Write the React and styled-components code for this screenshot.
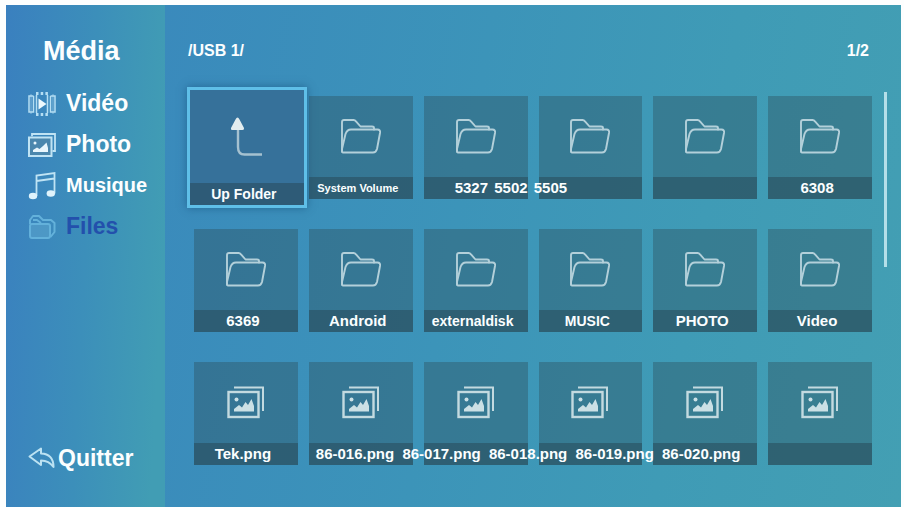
import React, { useState } from 'react';
import styled, { createGlobalStyle } from 'styled-components';

const GlobalStyle = createGlobalStyle`
  * {
    box-sizing: border-box;
  }

  body {
    margin: 0;
    background: #fdfefe;
    font-family: 'Liberation Sans', Arial, sans-serif;
    font-weight: bold;
  }

  button {
    border: 0;
    padding: 0;
    background: none;
    color: inherit;
    font: inherit;
    cursor: pointer;
  }
`;

const Screen = styled.div`
  display: flex;
  min-height: 100vh;
  padding: 5px 3px 0 6px;
  color: #fbfeff;
`;

const Sidebar = styled.nav`
  display: flex;
  flex-direction: column;
  flex: 0 0 159px;
  padding: 30px 0 36px 22px;
  background: linear-gradient(93deg, #3a80bf 0%, #3c8fba 50%, #419db4 92%);
`;

const SidebarTitle = styled.h1`
  margin: 0 0 16px 15px;
  font-size: 27px;
  line-height: 32px;
`;

const Menu = styled.ul`
  margin: 0;
  padding: 0;
  list-style: none;
`;

const MenuButton = styled.button`
  display: flex;
  align-items: center;
  gap: ${({ $tight }) => ($tight ? '2px' : '10px')};
  height: ${({ $tight }) => ($tight ? '26px' : '41px')};
  color: ${({ $active }) => ($active ? '#2350ac' : 'inherit')};
  font-size: ${({ $small }) => ($small ? '20px' : '23px')};

  svg {
    flex: none;
    opacity: ${({ $active }) => ($active ? 0.7 : 1)};
  }
`;

const QuitArea = styled.div`
  margin-top: auto;
`;

const Main = styled.main`
  flex: 1;
  min-width: 0;
  padding: 36px 14px 30px 23px;
  background: linear-gradient(100deg, #3a8abc 0%, #3c94b9 40%, #3f9bb6 70%, #439fb3 100%);
`;

const Header = styled.header`
  display: flex;
  justify-content: space-between;
  padding-right: 18px;
  font-size: 16px;
  line-height: 20px;
`;

const Body = styled.div`
  display: flex;
  align-items: flex-start;
  gap: 12px;
  padding: 35px 0 0 6px;
`;

const Grid = styled.div`
  display: grid;
  flex: 1;
  grid-template-columns: repeat(6, minmax(0, 1fr));
  grid-auto-rows: 103px;
  column-gap: 11px;
  row-gap: 30px;
`;

const ScrollThumb = styled.div`
  flex: none;
  width: 3px;
  height: 175px;
  margin-top: -4px;
  background: #b4dfe9;
`;

const Tile = styled.button`
  display: flex;
  flex-direction: column;
  min-width: 0;
  margin: ${({ $selected }) => ($selected ? '-9px -9px -9px -7px' : '0')};
  border: ${({ $selected }) => ($selected ? '3px solid #5fbfe8' : '0')};
  background: ${({ $selected }) => ($selected ? '#36719a' : 'rgba(45, 80, 92, 0.4)')};
  box-shadow: ${({ $selected }) => ($selected ? '0 0 8px rgba(14, 66, 110, 0.5)' : 'none')};
`;

const TileIcon = styled.span`
  display: flex;
  align-items: center;
  justify-content: center;
  flex: 1;
  width: 100%;
`;

// names longer than a tile run on over the tiles beside it
const TileLabel = styled.span`
  display: flex;
  justify-content: ${({ $indent }) => ($indent ? 'flex-start' : 'center')};
  width: 100%;
  height: 22px;
  padding-left: ${({ $indent }) => $indent || 0}px;
  padding-right: 6px;
  background: rgba(38, 70, 84, 0.5);
  font-size: ${({ $size }) => $size || 15}px;
  line-height: 22px;
  white-space: nowrap;
`;

const TileText = styled.span`
  position: relative;
  z-index: 1;
`;

const Name = styled.span`
  &:not(:first-child) {
    margin-left: ${({ $space }) => $space}px;
  }
`;

const FolderIcon = () => (
  <svg width="40" height="35" viewBox="0 0 40 35" fill="none" stroke="#b3d0da" strokeWidth="1.9" strokeLinejoin="round" strokeLinecap="round">
    <path d="M33 10.5V9Q33 7.5 31 7.5H19.5L15 2.3Q14 1 12.5 1H3Q1 1 1 3V32" />
    <path d="M1 33V30L4.5 15Q6 10.5 10 10.5H36.5Q39.5 10.5 39 14L36 30Q35 33.5 32 33.5H2Q1 33.5 1 32" />
  </svg>
);

const PictureIcon = () => (
  <svg width="38" height="33" viewBox="0 0 38 33" fill="none" stroke="#c3dae0" strokeWidth="2">
    <rect x="1.5" y="6" width="30" height="25" strokeWidth="2.4" />
    <path d="M7 1.5H36V25" strokeWidth="2" />
    <circle cx="9.5" cy="13.5" r="2" fill="#cbe0e5" stroke="none" />
    <path d="M7 25.5V23L12 19L15 21.5L18.5 16L21 19L24.5 13L27 20V25.5Z" fill="#cbe0e5" stroke="none" />
  </svg>
);

const UpIcon = () => (
  <svg width="33" height="40" viewBox="0 0 33 40" fill="none">
    <path d="M8 11V30Q8 37.5 14.5 37.5H32" stroke="#a5c1d0" strokeWidth="2.4" />
    <path d="M7.5 0.5Q8.5 0.5 9.5 2.5L14 11Q14.5 13 12.5 13H2Q0.5 13 1 11L5.5 2.5Q6.5 0.5 7.5 0.5Z" fill="#e3edef" />
  </svg>
);

const VideoIcon = () => (
  <svg width="28" height="26" viewBox="0 0 28 26" fill="none" stroke="#b5def3" strokeWidth="1.5">
    <path d="M8.5 4V22M19.5 4V22" />
    <path d="M8 2.5H20M8 23.5H20" strokeWidth="3" strokeDasharray="2.5 2.2" />
    <path d="M5.5 5H1V21H5.5V5M22.5 5H27V21H22.5V5" />
    <path d="M3 3V23M25 3V23" strokeWidth="1" opacity="0.6" />
    <path d="M10.5 7.5L18.5 13L10.5 18.5Z" fill="#ecf8fd" stroke="none" />
  </svg>
);

const PhotoIcon = () => (
  <svg width="28" height="24" viewBox="0 0 28 24" fill="none" stroke="#bfe3f4">
    <path d="M4 3.2V1H27V18H24.5" strokeWidth="1.8" />
    <rect x="1" y="4.5" width="22.5" height="18.5" strokeWidth="2" fill="#4b87ad" />
    <circle cx="7" cy="10" r="1.5" fill="#e9f6fc" stroke="none" />
    <path d="M5 19V17L9 14.5L11.5 16L15 13L18.5 9.5L20 15V19Z" fill="#e9f6fc" stroke="none" />
  </svg>
);

const MusicIcon = () => (
  <svg width="28" height="28" viewBox="0 0 28 28" fill="none" stroke="#bfe3f4" strokeWidth="1.8">
    <path d="M8.5 24V3.5L26.5 1V21.5M8.5 9L26.5 6.5" />
    <ellipse cx="5" cy="24" rx="4.2" ry="3.2" fill="#dff3fc" stroke="none" />
    <ellipse cx="22.8" cy="21.5" rx="4.2" ry="3.2" fill="#dff3fc" stroke="none" />
  </svg>
);

const FilesIcon = () => (
  <svg width="28" height="26" viewBox="0 0 28 26" fill="none" stroke="#74c3e8" strokeWidth="2" strokeLinejoin="round">
    <path d="M2 10V6L5 2H11L15 6H23L26.5 9V18L22.5 23" />
    <path d="M5 6H9L13 9" />
    <path d="M4 10H20Q22 10 22 12V22Q22 24 20 24H4Q2 24 2 22V12Q2 10 4 10Z" fill="#559fca" />
  </svg>
);

const QuitIcon = () => (
  <svg width="28" height="23" viewBox="0 0 28 23" fill="none" stroke="#bce2f2" strokeWidth="2" strokeLinejoin="round">
    <path d="M1.5 9.5L13 1.5V6.5Q25.5 7 25.5 20Q21 13.5 13 13.5V18Z" />
  </svg>
);

const MENU = [
  { name: 'Vidéo', Icon: VideoIcon },
  { name: 'Photo', Icon: PhotoIcon },
  { name: 'Musique', Icon: MusicIcon, small: true },
  { name: 'Files', Icon: FilesIcon },
];

const ICONS = { up: UpIcon, folder: FolderIcon, picture: PictureIcon };

const ENTRIES = [
  { type: 'up', names: ['Up Folder'], size: 14 },
  { type: 'folder', names: ['System Volume'], size: 11 },
  { type: 'folder', names: ['5327', '5502', '5505'], indent: 31, space: 2 },
  { type: 'folder', names: [] },
  { type: 'folder', names: [] },
  { type: 'folder', names: ['6308'] },
  { type: 'folder', names: ['6369'] },
  { type: 'folder', names: ['Android'] },
  { type: 'folder', names: ['externaldisk'], size: 14 },
  { type: 'folder', names: ['MUSIC'], size: 14 },
  { type: 'folder', names: ['PHOTO'] },
  { type: 'folder', names: ['Video'] },
  { type: 'picture', names: ['Tek.png'] },
  {
    type: 'picture',
    names: ['86-016.png', '86-017.png', '86-018.png', '86-019.png', '86-020.png'],
    indent: 7,
    space: 4,
  },
  { type: 'picture', names: [] },
  { type: 'picture', names: [] },
  { type: 'picture', names: [] },
  { type: 'picture', names: [] },
];

const Entry = ({ entry, selected, onSelect }) => {
  const Icon = ICONS[entry.type];

  return (
    <Tile $selected={selected} onClick={onSelect} aria-label={entry.names.join(' ') || entry.type}>
      <TileIcon>
        <Icon />
      </TileIcon>
      <TileLabel $size={entry.size} $indent={entry.indent}>
        <TileText>
          {entry.names.map((name, i) => (
            <React.Fragment key={name}>
              {i > 0 && ' '}
              <Name $space={entry.space}>{name}</Name>
            </React.Fragment>
          ))}
        </TileText>
      </TileLabel>
    </Tile>
  );
};

const App = () => {
  const [section, setSection] = useState('Files');
  const [selected, setSelected] = useState(0);

  return (
    <>
      <GlobalStyle />
      <Screen>
        <Sidebar>
          <SidebarTitle>Média</SidebarTitle>
          <Menu>
            {MENU.map(({ name, Icon, small }) => (
              <li key={name}>
                <MenuButton $active={name === section} $small={small} onClick={() => setSection(name)}>
                  <Icon />
                  {name}
                </MenuButton>
              </li>
            ))}
          </Menu>
          <QuitArea>
            <MenuButton $tight>
              <QuitIcon />
              Quitter
            </MenuButton>
          </QuitArea>
        </Sidebar>
        <Main>
          <Header>
            <span>/USB 1/</span>
            <span>1/2</span>
          </Header>
          <Body>
            <Grid>
              {ENTRIES.map((entry, i) => (
                <Entry
                  key={i}
                  entry={entry}
                  selected={i === selected}
                  onSelect={() => setSelected(i)}
                />
              ))}
            </Grid>
            <ScrollThumb />
          </Body>
        </Main>
      </Screen>
    </>
  );
};

export default App;
